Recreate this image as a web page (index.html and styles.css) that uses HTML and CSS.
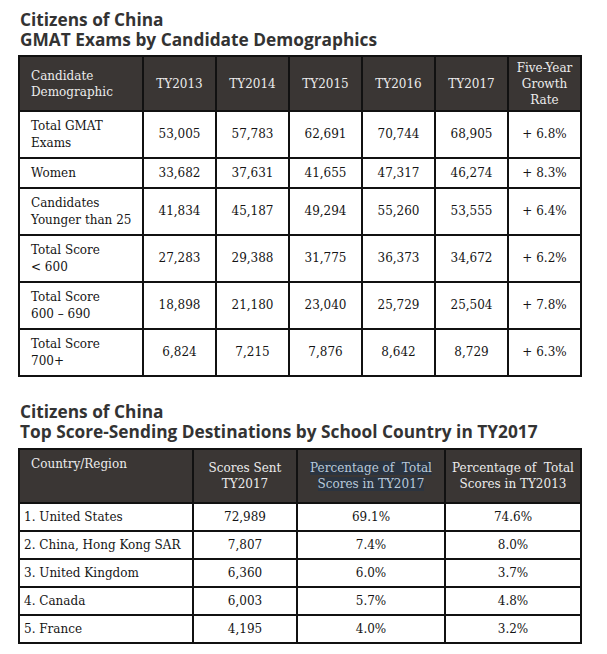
FILE: index.html
```html
<!DOCTYPE html>
<html lang="en">
<head>
<meta charset="utf-8">
<title>Citizens of China GMAT</title>
<link rel="stylesheet" href="styles.css">
</head>
<body>
<div class="page">
  <h2 class="title">Citizens of China<br>GMAT Exams by Candidate Demographics</h2>
  <table class="grid demo">
    <colgroup>
      <col class="c-label"><col class="c-yr"><col class="c-yr"><col class="c-yr"><col class="c-yr"><col class="c-yr"><col class="c-yr">
    </colgroup>
    <thead>
      <tr>
        <th class="lbl">Candidate<br>Demographic</th>
        <th>TY2013</th><th>TY2014</th><th>TY2015</th><th>TY2016</th><th>TY2017</th>
        <th>Five-Year<br>Growth<br>Rate</th>
      </tr>
    </thead>
    <tbody>
      <tr class="tall"><td class="lbl">Total GMAT<br>Exams</td><td>53,005</td><td>57,783</td><td>62,691</td><td>70,744</td><td>68,905</td><td>+ 6.8%</td></tr>
      <tr class="short"><td class="lbl">Women</td><td>33,682</td><td>37,631</td><td>41,655</td><td>47,317</td><td>46,274</td><td>+ 8.3%</td></tr>
      <tr class="tall"><td class="lbl">Candidates<br>Younger than 25</td><td>41,834</td><td>45,187</td><td>49,294</td><td>55,260</td><td>53,555</td><td>+ 6.4%</td></tr>
      <tr class="tall"><td class="lbl">Total Score<br>&lt; 600</td><td>27,283</td><td>29,388</td><td>31,775</td><td>36,373</td><td>34,672</td><td>+ 6.2%</td></tr>
      <tr class="tall"><td class="lbl">Total Score<br>600 – 690</td><td>18,898</td><td>21,180</td><td>23,040</td><td>25,729</td><td>25,504</td><td>+ 7.8%</td></tr>
      <tr class="tall"><td class="lbl">Total Score<br>700+</td><td>6,824</td><td>7,215</td><td>7,876</td><td>8,642</td><td>8,729</td><td>+ 6.3%</td></tr>
    </tbody>
  </table>

  <h2 class="title second">Citizens of China<br>Top Score-Sending Destinations by School Country in TY2017</h2>
  <table class="grid dest">
    <colgroup>
      <col class="d-country"><col class="d-sent"><col class="d-p17"><col class="d-p13">
    </colgroup>
    <thead>
      <tr>
        <th class="lbl top">Country/Region</th>
        <th>Scores Sent<br>TY2017</th>
        <th><span class="sel">Percentage of&nbsp; Total<br>Scores in TY2017</span></th>
        <th>Percentage of&nbsp; Total<br>Scores in TY2013</th>
      </tr>
    </thead>
    <tbody>
      <tr><td class="cty">1. United States</td><td>72,989</td><td>69.1%</td><td>74.6%</td></tr>
      <tr><td class="cty">2. China, Hong Kong SAR</td><td>7,807</td><td>7.4%</td><td>8.0%</td></tr>
      <tr><td class="cty">3. United Kingdom</td><td>6,360</td><td>6.0%</td><td>3.7%</td></tr>
      <tr><td class="cty">4. Canada</td><td>6,003</td><td>5.7%</td><td>4.8%</td></tr>
      <tr><td class="cty">5. France</td><td>4,195</td><td>4.0%</td><td>3.2%</td></tr>
    </tbody>
  </table>
</div>
</body>
</html>
```
FILE: styles.css
```css
html, body {
  margin: 0;
  padding: 0;
  background: #ffffff;
}

.page {
  padding: 10px 0 0 18px;
  width: 562px;
}

.title {
  margin: 0 0 5px 2px;
  font-family: "Open Sans", "DejaVu Sans", sans-serif;
  font-weight: 700;
  font-size: 17.3px;
  line-height: 20px;
  color: #333333;
}

.title.second {
  margin-top: 25px;
  margin-bottom: 6px;
}

.grid {
  width: 562px;
  table-layout: fixed;
  border-collapse: collapse;
  font-family: "DejaVu Serif", "Liberation Serif", serif;
  font-size: 12px;
  color: #151515;
}

.grid th,
.grid td {
  border: 2px solid #111111;
  text-align: center;
  vertical-align: middle;
  padding: 0 4px;
}

.grid th {
  background: #3a3634;
  color: #ececec;
  font-weight: 400;
  line-height: 16px;
}

.grid td {
  line-height: 17px;
}

.grid .lbl {
  text-align: left;
  padding-left: 11px;
}

.c-label { width: 124px; }
.c-yr { width: 73px; }

.demo thead tr { height: 55px; }
.demo tr.tall { height: 47px; }
.demo tr.short { height: 30px; }

.d-country { width: 174px; }
.d-sent { width: 104px; }
.d-p17 { width: 148px; }
.d-p13 { width: 136px; }

.dest thead tr { height: 54px; }
.dest tbody tr { height: 28px; }

.dest th.top {
  vertical-align: top;
  padding-top: 6px;
}

.dest td.cty {
  text-align: left;
  padding-left: 4px;
  white-space: nowrap;
}

.sel {
  background: #2b3440;
  color: #b9c9da;
}
```
